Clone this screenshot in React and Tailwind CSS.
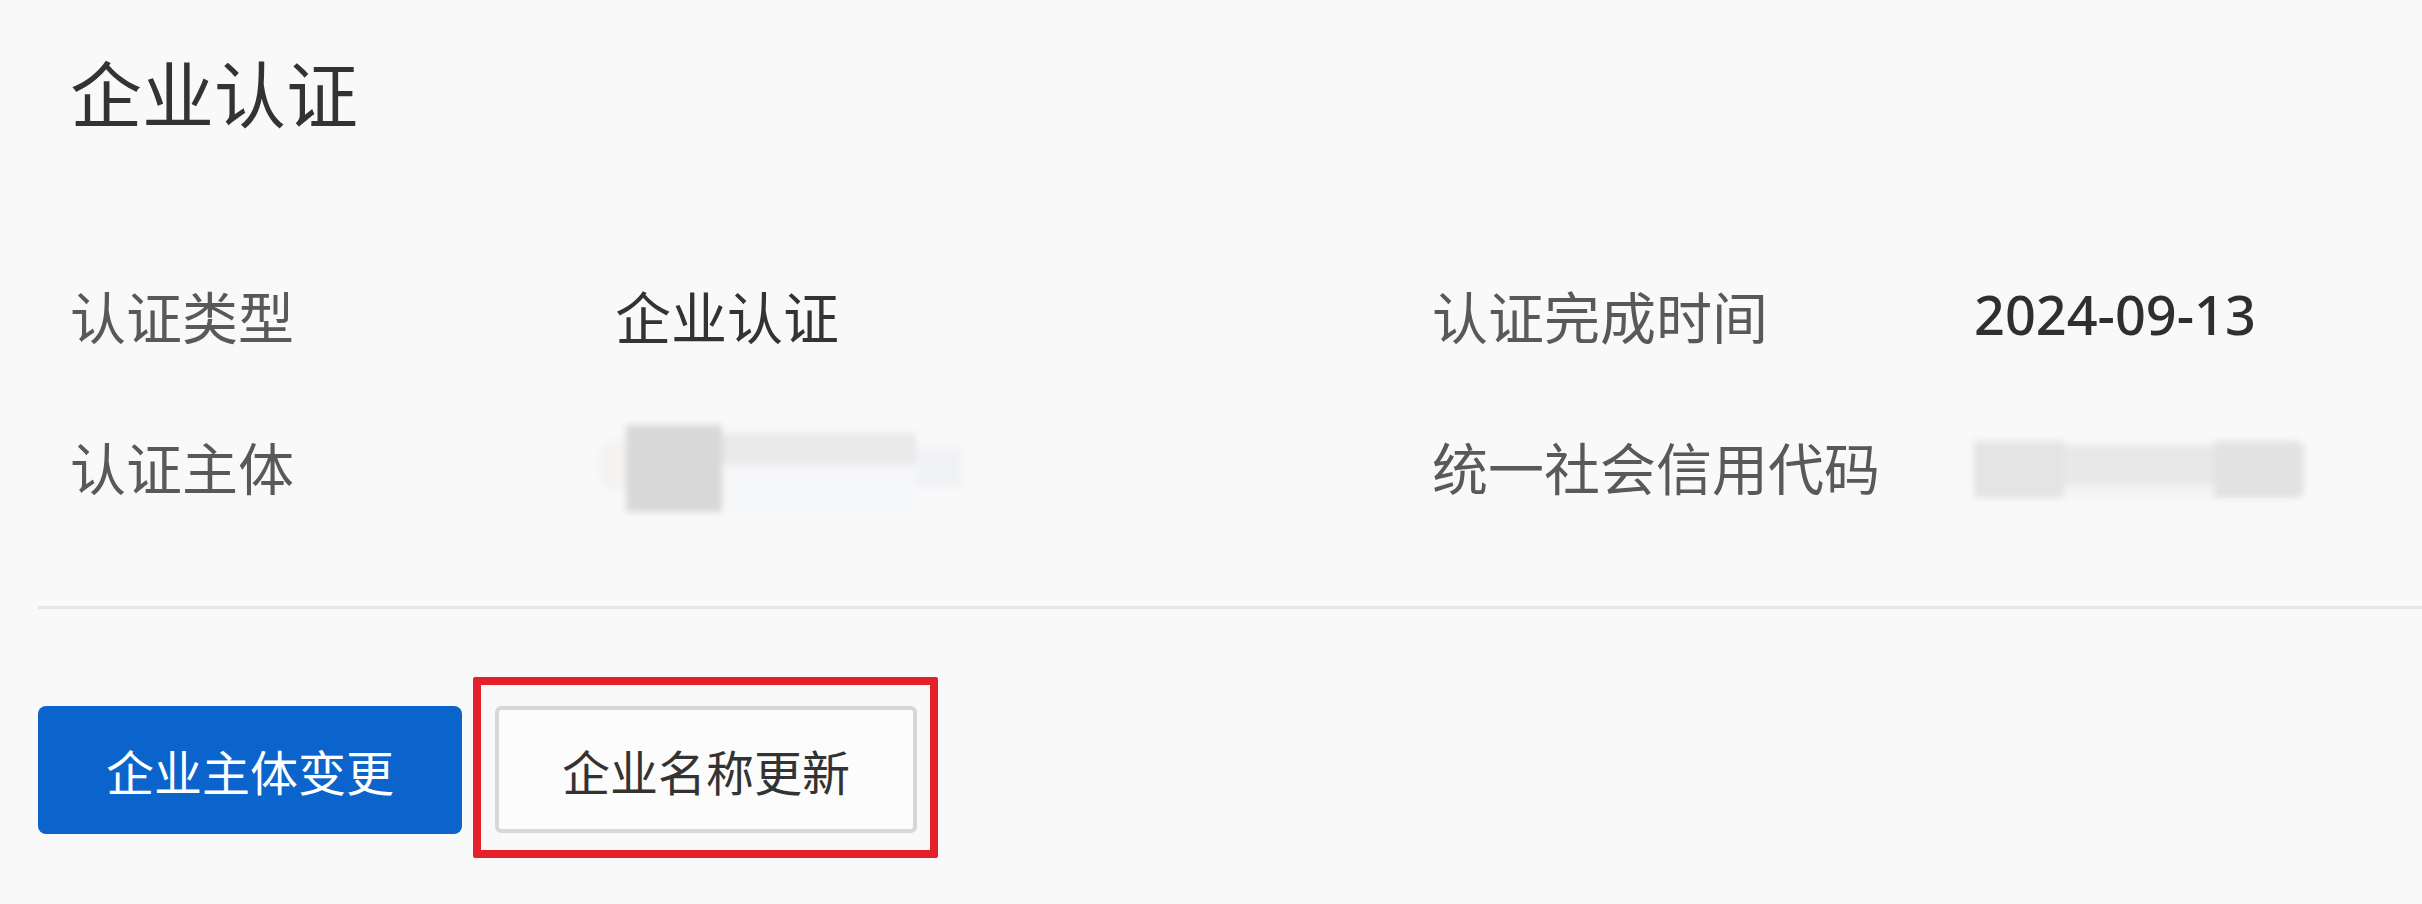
import React from 'react';

const rows = [
    { label: '认证类型', value: '企业认证', label2: '认证完成时间', value2: '2024-09-13' },
    { label: '认证主体', blurred: true, label2: '统一社会信用代码', blurred2: true },
];

// pixelated / blurred company name
const BlurA = () => (
    <div className="flex items-start h-[87px] blur-[3px]">
        <div className="mt-[14px] -mr-[12px] w-[40px] h-[52px] rounded-full bg-[#f4f3f1]" />
        <div className="w-[96px] h-[87px] bg-[#d8d8d8]" />
        <div className="flex flex-col w-[194px]">
            <div className="mt-[8px] h-[32px] bg-[#e9e9e9]" />
            <div className="h-[47px] bg-[#f6f7f9]" />
        </div>
        <div className="mt-[22px] w-[46px] h-[40px] bg-[#f1f2f5]" />
    </div>
);

// blurred credit code
const BlurB = () => (
    <div className="flex h-[57px] blur-[3px]">
        <div className="w-[90px] h-[57px] bg-[#e4e4e4]" />
        <div className="flex flex-col w-[150px]">
            <div className="mt-[4px] h-[40px] bg-[#e8e8e8]" />
            <div className="h-[13px] bg-[#f4f4f4]" />
        </div>
        <div className="w-[90px] h-[57px] rounded-r-[8px] bg-[#e2e2e2]" />
    </div>
);

const App = () => {
    return (
        <div className="w-[2422px] h-[904px] bg-[#f9f9f9] overflow-hidden font-['Noto_Sans_CJK_SC','Noto_Sans',sans-serif]">
            <div className="pl-[38px] pt-[41px]">
                <h1 className="pl-[32px] text-[72px] leading-[100px] font-normal text-[#333333]">企业认证</h1>

                {/* Info grid */}
                <div className="mt-[98px] pl-[32px] grid grid-cols-[545px_817px_542px_1fr]">
                    {rows.map((r) => (
                        <React.Fragment key={r.label}>
                            <div className="h-[151px] flex items-center text-[56px] text-[#595959]">{r.label}</div>
                            <div className="h-[151px] flex items-center text-[56px] text-[#333333]">
                                {r.blurred ? <div className="-ml-[17px] mt-[6px]"><BlurA /></div> : r.value}
                            </div>
                            <div className="h-[151px] flex items-center text-[56px] text-[#595959]">{r.label2}</div>
                            <div className="h-[151px] flex items-center text-[54px] font-medium text-[#2f2f2f] font-['Noto_Sans',sans-serif]">
                                {r.blurred2 ? <div className="mt-[8px]"><BlurB /></div> : r.value2}
                            </div>
                        </React.Fragment>
                    ))}
                </div>

                <div className="mt-[65px] h-[3px] bg-[#e6e6e6]" />

                {/* Actions */}
                <div className="mt-[97px] flex gap-[33px]">
                    <button className="w-[424px] h-[128px] rounded-[8px] bg-[#0b63cc] text-white text-[48px]">
                        企业主体变更
                    </button>
                    <div className="relative">
                        <button className="w-[422px] h-[127px] rounded-[6px] border-[4px] border-[#d7d7d7] bg-[#fcfcfc] text-[#333333] text-[48px]">
                            企业名称更新
                        </button>
                        <div className="absolute -left-[22px] -right-[21px] -top-[29px] -bottom-[24px] border-[8px] border-[#e4202b] rounded-[2px] pointer-events-none" />
                    </div>
                </div>
            </div>
        </div>
    );
};

export default App;
